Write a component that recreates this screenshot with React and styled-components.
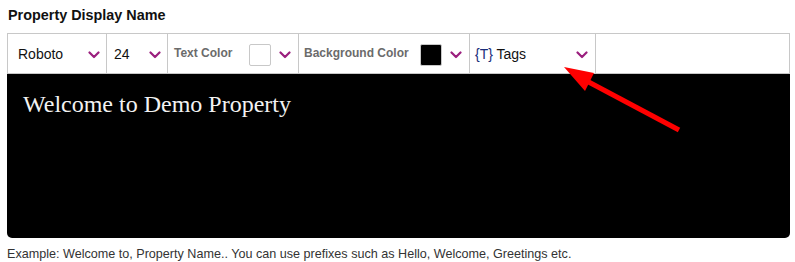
import React from "react";
import styled, { createGlobalStyle } from "styled-components";

const Global = createGlobalStyle`
  html, body { margin: 0; padding: 0; background: #fff; }
  body { font-family: "Liberation Sans", Arial, sans-serif; }
`;

const Page = styled.div`
  position: relative;
  width: 795px;
  height: 262px;
  padding: 7px 5px 0 7px;
  box-sizing: border-box;
`;

const Title = styled.div`
  font-size: 14.4px;
  font-weight: bold;
  color: #111;
  line-height: 17px;
  margin-left: 1px;
  margin-bottom: 9px;
`;

const Editor = styled.div`
  width: 783px;
`;

const Toolbar = styled.div`
  display: flex;
  height: 41px;
  border: 1px solid #c8c8c8;
  box-sizing: border-box;
  background: #fff;
`;

const Cell = styled.div`
  display: flex;
  align-items: center;
  width: ${(p) => p.$w}px;
  box-sizing: border-box;
  padding: 0 ${(p) => p.$pr ?? 6}px 0 ${(p) => p.$pl ?? 7}px;
  border-right: 1px solid #c8c8c8;
  gap: 8px;
  white-space: nowrap;
`;

const Value = styled.span`
  flex: 1;
  font-size: 14px;
  color: #111;
  padding-top: 1px;
`;

const Label = styled.span`
  font-size: 12px;
  font-weight: bold;
  color: #6b6b6b;
  margin-top: -2px;
`;

const TagBrace = styled.span`
  color: #1a2d7a;
`;

const Swatch = styled.span`
  flex: none;
  width: 22px;
  height: 22px;
  box-sizing: border-box;
  border: 1px solid #c8c8c8;
  border-radius: 2px;
  background: ${(p) => p.$c};
  margin-left: auto;
  margin-top: 3px;
`;

const Chev = () => (
  <svg width="12" height="8" viewBox="0 0 12 8" style={{ flex: "none", marginTop: 3 }}>
    <path d="M1.5 1.5 L6 6 L10.5 1.5" fill="none" stroke="#9b1f7e" strokeWidth="2.2" strokeLinecap="round" strokeLinejoin="round" />
  </svg>
);

const Preview = styled.div`
  height: 164px;
  background: #000;
  border-radius: 0 0 5px 5px;
  padding: 17px 16px;
  box-sizing: border-box;
  font-family: "Liberation Serif", "Times New Roman", serif;
  font-size: 24px;
  color: #f2f2f2;
`;

const Hint = styled.div`
  font-size: 12.6px;
  color: #333;
  margin-top: 9px;
  line-height: 15px;
`;

const Arrow = styled.svg`
  position: absolute;
  left: 0;
  top: 0;
  pointer-events: none;
`;

export default function App() {
  return (
    <>
      <Global />
      <Page>
        <Title>Property Display Name</Title>
        <Editor>
          <Toolbar>
            <Cell $w={99} $pl={10} $pr={6}>
              <Value>Roboto</Value>
              <Chev />
            </Cell>
            <Cell $w={61} $pl={7} $pr={6}>
              <Value>24</Value>
              <Chev />
            </Cell>
            <Cell $w={131} $pl={6} $pr={7}>
              <Label>Text Color</Label>
              <Swatch $c="#fff" />
              <Chev />
            </Cell>
            <Cell $w={171} $pl={5} $pr={7}>
              <Label>Background Color</Label>
              <Swatch $c="#000" />
              <Chev />
            </Cell>
            <Cell $w={126} $pl={5} $pr={7}>
              <Value>
                <TagBrace>{"{T}"}</TagBrace> Tags
              </Value>
              <Chev />
            </Cell>
          </Toolbar>
          <Preview>Welcome to Demo Property</Preview>
        </Editor>
        <Hint>Example: Welcome to, Property Name.. You can use prefixes such as Hello, Welcome, Greetings etc.</Hint>
        <Arrow width="795" height="262" viewBox="0 0 795 262">
          <line x1="679" y1="130" x2="583" y2="79" stroke="#ff0000" strokeWidth="5" />
          <polygon points="564,67 594,73 585,91" fill="#ff0000" />
        </Arrow>
      </Page>
    </>
  );
}
